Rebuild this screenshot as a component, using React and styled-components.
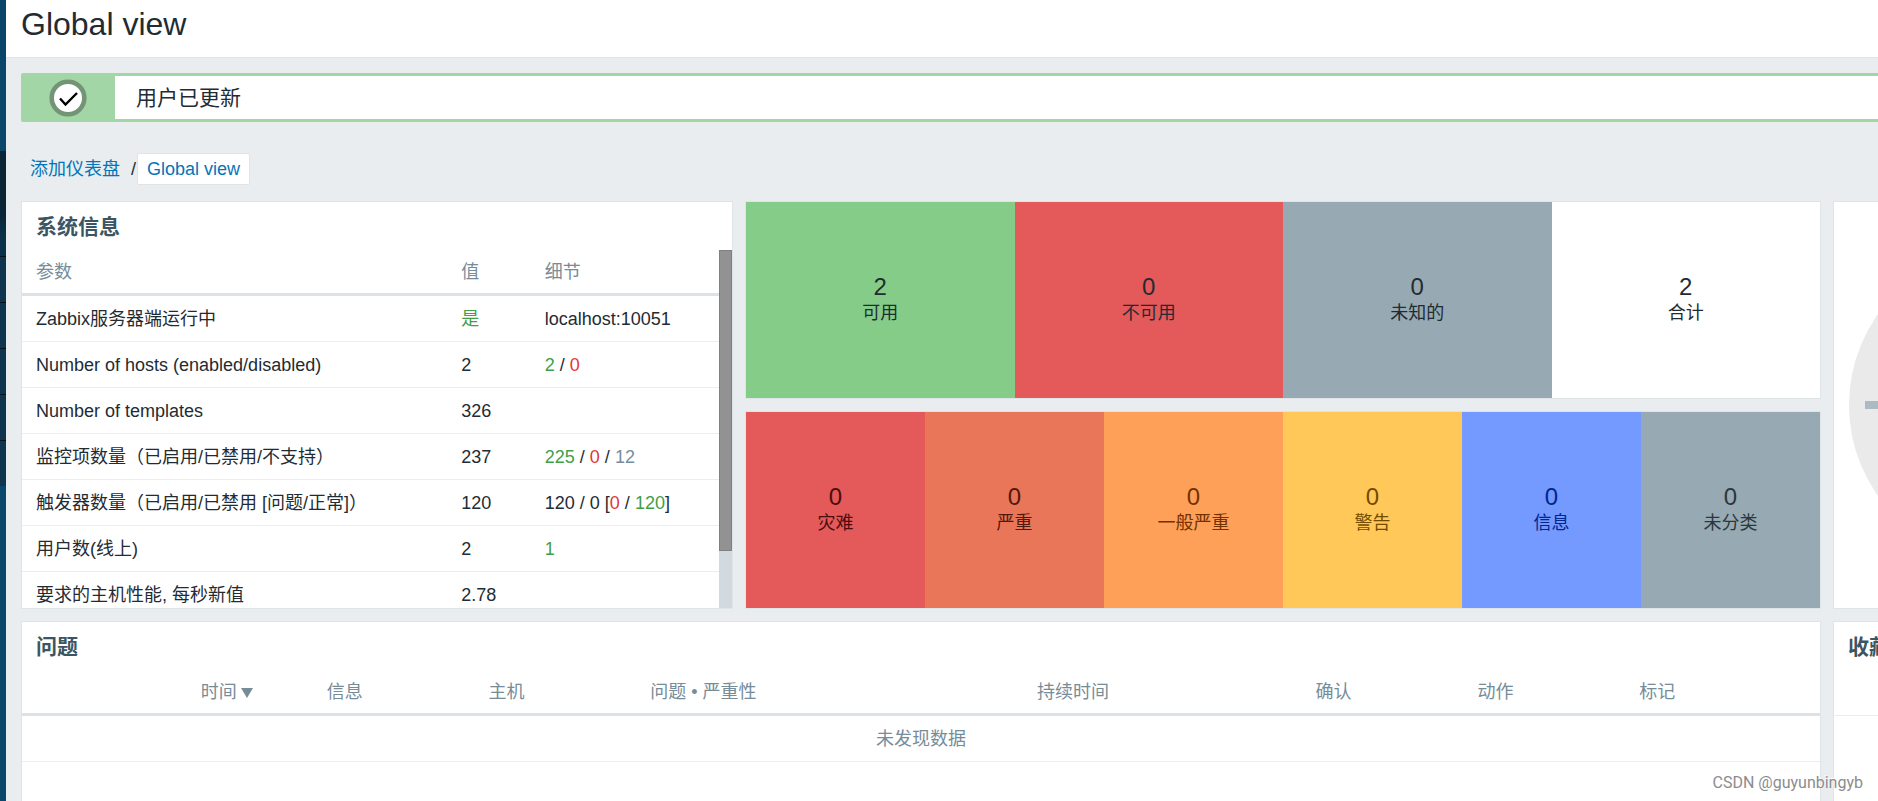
import React from 'react';
import styled, { createGlobalStyle } from 'styled-components';

const GlobalStyle = createGlobalStyle`
  * { box-sizing: border-box; }
  html, body, #root { height: 100%; }
  body {
    margin: 0;
    overflow: hidden;
    background: #e9edf0;
    color: #1f2c33;
    font: 400 18px/22px "Liberation Sans", "Noto Sans CJK SC", sans-serif;
  }
`;

const Page = styled.div`
  position: relative;
  display: flex;
  height: 100vh;
  overflow: hidden;
`;

const Sidebar = styled.nav`
  flex: none;
  display: flex;
  flex-direction: column;
  width: 6px;
  padding-top: 151px;
  background: #0a466a;
`;

const SectionHead = styled.div`
  height: 105px;
  background: linear-gradient(#0a2536, #0a2536 60%, #0b3048 80%);
`;

const SubItem = styled.div`
  height: 46px;
  border-top: 1px solid #04111a;
  background: #10344d;
`;

const Main = styled.main`
  flex: 1;
  min-width: 0;
  display: flex;
  flex-direction: column;
`;

const Header = styled.header`
  flex: none;
  height: 58px;
  padding: 6px 15px;
  background: #fff;
  border-bottom: 1px solid #dfe4e7;
`;

const Title = styled.h1`
  margin: 0;
  font-size: 32px;
  line-height: 36px;
  font-weight: 400;
`;

/* The dashboard is larger than the window: its last column and row run past the edges. */
const Content = styled.div`
  flex: 1;
  min-height: 0;
  display: flex;
  flex-direction: column;
  margin: 0 -316px -24px 0;
  padding: 15px 15px 0;
`;

const Message = styled.output`
  flex: none;
  display: flex;
  height: 49px;
  border: 3px solid #a3d6a6;
  border-radius: 2px;
  background: #fff;
  font-size: 21px;
  line-height: 43px;
`;

const MessageIcon = styled.span`
  flex: none;
  display: flex;
  align-items: center;
  justify-content: center;
  width: 91px;
  margin-right: 21px;
  padding-right: 3px;
  background: #a3d6a6;
`;

const Breadcrumbs = styled.nav`
  flex: none;
  display: flex;
  align-items: center;
  height: 32px;
  margin: 31px 0 16px;
  padding-left: 9px;
`;

const Separator = styled.span`
  margin-left: 11px;
`;

const Crumb = styled.a`
  color: #0275b8;
  text-decoration: none;
  ${({ $current }) => $current && `
    margin-left: 1px;
    padding: 4px 9px;
    background: #fff;
    border: 1px solid #dfe4e7;
    border-radius: 2px;
  `}
`;

const Dashboard = styled.div`
  flex: 1;
  min-height: 0;
  display: grid;
  grid-template-columns: minmax(0, 712fr) minmax(0, 1076fr) 346px;
  grid-template-rows: 198px 198px 1fr;
  gap: 12px;
`;

const Widget = styled.section`
  grid-column: ${({ $cols }) => $cols};
  grid-row: ${({ $rows }) => $rows};
  display: flex;
  flex-direction: column;
  min-height: 0;
  overflow: hidden;
  background: #fff;
  border: 1px solid #dfe4e7;
`;

const WidgetTitle = styled.h2`
  flex: none;
  height: 48px;
  margin: 0;
  padding: 0 14px;
  font-size: 21px;
  line-height: 50px;
  font-weight: 700;
  color: #3c5563;
`;

const ScrollArea = styled.div`
  flex: 1;
  min-height: 0;
  display: flex;
  align-items: stretch;
  overflow: hidden;
`;

const ScrollBody = styled.div`
  flex: 1;
  min-width: 0;
`;

const ScrollTrack = styled.div`
  flex: none;
  width: 13px;
  background: #d2d9df;
`;

const ScrollThumb = styled.div`
  height: 84%;
  background: #929292;
  border: 1px solid #808080;
`;

const Table = styled.table`
  width: 100%;
  table-layout: fixed;
  border-collapse: separate;
  border-spacing: 0;
`;

const Th = styled.th`
  width: ${({ $w }) => $w || 'auto'};
  height: 46px;
  padding: 0 0 0 14px;
  text-align: left;
  font-weight: 400;
  white-space: nowrap;
  color: #768d99;
  border-bottom: 3px solid #dce2e5;
`;

const ProblemTh = styled(Th)`
  padding-left: 17px;
`;

const Td = styled.td`
  height: 46px;
  padding: 0 0 0 14px;
  white-space: nowrap;
  border-bottom: 1px solid #ebeef0;
`;

const EmptyTd = styled(Td)`
  padding: 0;
  text-align: center;
  color: #768d99;
`;

const EmptyRow = styled.div`
  height: 46px;
  border-bottom: 1px solid #ebeef0;
`;

const tones = { green: '#429e47', red: '#e33734', grey: '#768d99' };

const Tone = styled.span`
  color: ${({ $tone }) => tones[$tone]};
`;

const SortArrow = styled.svg`
  margin-left: 4px;
`;

const Tiles = styled.div`
  flex: 1;
  display: flex;
`;

const Tile = styled.div`
  flex: 1 1 0;
  display: flex;
  flex-direction: column;
  align-items: center;
  justify-content: center;
  line-height: 26px;
  background: ${({ $bg }) => $bg};
  color: ${({ $fg }) => $fg};
`;

const Count = styled.span`
  font-size: 24px;
`;

const ClockFace = styled.svg`
  display: block;
  width: 314px;
  height: 314px;
  margin: auto;
`;

const Watermark = styled.div`
  position: absolute;
  right: 15px;
  bottom: 7px;
  font-family: Roboto, "Liberation Sans", sans-serif;
  font-size: 16px;
  color: #8c8c8c;
  text-shadow: -1px -1px 0 #fff;
`;

const G = ({ children }) => <Tone $tone="green">{children}</Tone>;
const R = ({ children }) => <Tone $tone="red">{children}</Tone>;
const N = ({ children }) => <Tone $tone="grey">{children}</Tone>;

const systemRows = [
  ['Zabbix服务器端运行中', <G>是</G>, 'localhost:10051'],
  ['Number of hosts (enabled/disabled)', '2', <><G>2</G> / <R>0</R></>],
  ['Number of templates', '326', ''],
  ['监控项数量（已启用/已禁用/不支持）', '237', <><G>225</G> / <R>0</R> / <N>12</N></>],
  ['触发器数量（已启用/已禁用 [问题/正常]）', '120', <>120 / 0 [<R>0</R> / <G>120</G>]</>],
  ['用户数(线上)', '2', <G>1</G>],
  ['要求的主机性能, 每秒新值', '2.78', ''],
];

const hostTiles = [
  ['2', '可用', '#86cc89', '#1f2c33'],
  ['0', '不可用', '#e45959', '#1f2c33'],
  ['0', '未知的', '#97aab3', '#1f2c33'],
  ['2', '合计', '#ffffff', '#1f2c33'],
];

const severityTiles = [
  ['0', '灾难', '#e45959', '#4b0c0c'],
  ['0', '严重', '#e97659', '#52190b'],
  ['0', '一般严重', '#ffa059', '#733100'],
  ['0', '警告', '#ffc859', '#734c00'],
  ['0', '信息', '#7499ff', '#00268e'],
  ['0', '未分类', '#97aab3', '#2b373d'],
];

const TileRow = ({ items }) => (
  <Tiles>
    {items.map(([count, label, bg, fg]) => (
      <Tile key={label} $bg={bg} $fg={fg}>
        <Count>{count}</Count>
        <span>{label}</span>
      </Tile>
    ))}
  </Tiles>
);

export default function App() {
  return (
    <Page>
      <GlobalStyle />
      <Sidebar>
        <SectionHead />
        {[0, 1, 2, 3, 4].map((i) => <SubItem key={i} />)}
      </Sidebar>
      <Main>
        <Header><Title>Global view</Title></Header>
        <Content>
          <Message>
            <MessageIcon>
              <svg width="38" height="38" viewBox="0 0 38 38">
                <circle cx="19" cy="19" r="16.3" fill="#fff" stroke="#739576" strokeWidth="4.6" />
                <path d="M11 19.5l5.5 6L28 14" fill="none" stroke="#000" strokeWidth="2.4" />
              </svg>
            </MessageIcon>
            用户已更新
          </Message>
          <Breadcrumbs>
            <Crumb href="#dashboards">添加仪表盘</Crumb>
            <Separator>/</Separator>
            <Crumb href="#global" $current>Global view</Crumb>
          </Breadcrumbs>
          <Dashboard>
            <Widget $cols="1" $rows="1 / 3">
              <WidgetTitle>系统信息</WidgetTitle>
              <ScrollArea>
                <ScrollBody>
                  <Table>
                    <thead>
                      <tr><Th $w="61%">参数</Th><Th $w="12%">值</Th><Th>细节</Th></tr>
                    </thead>
                    <tbody>
                      {systemRows.map(([name, value, details]) => (
                        <tr key={name}><Td>{name}</Td><Td>{value}</Td><Td>{details}</Td></tr>
                      ))}
                    </tbody>
                  </Table>
                </ScrollBody>
                <ScrollTrack><ScrollThumb /></ScrollTrack>
              </ScrollArea>
            </Widget>
            <Widget $cols="2" $rows="1"><TileRow items={hostTiles} /></Widget>
            <Widget $cols="2" $rows="2"><TileRow items={severityTiles} /></Widget>
            <Widget $cols="3" $rows="1 / 3">
              <ClockFace viewBox="0 0 314 314">
                <circle cx="157" cy="157" r="157" fill="#eaeaea" />
                <rect x="16" y="153" width="24" height="8" fill="#acbac1" />
              </ClockFace>
            </Widget>
            <Widget $cols="1 / 3" $rows="3">
              <WidgetTitle>问题</WidgetTitle>
              <Table>
                <thead>
                  <tr>
                    <ProblemTh $w="9%" />
                    <ProblemTh $w="7%">
                      时间
                      <SortArrow width="12" height="10" viewBox="0 0 12 10">
                        <path d="M0 0h12L6 10z" fill="#768d99" />
                      </SortArrow>
                    </ProblemTh>
                    <ProblemTh $w="9%">信息</ProblemTh>
                    <ProblemTh $w="9%">主机</ProblemTh>
                    <ProblemTh>问题 • 严重性</ProblemTh>
                    <ProblemTh $w="15.5%">持续时间</ProblemTh>
                    <ProblemTh $w="9%">确认</ProblemTh>
                    <ProblemTh $w="9%">动作</ProblemTh>
                    <ProblemTh $w="11%">标记</ProblemTh>
                  </tr>
                </thead>
                <tbody>
                  <tr><EmptyTd colSpan={9}>未发现数据</EmptyTd></tr>
                </tbody>
              </Table>
            </Widget>
            <Widget $cols="3" $rows="3">
              <WidgetTitle>收藏</WidgetTitle>
              <EmptyRow />
            </Widget>
          </Dashboard>
        </Content>
      </Main>
      <Watermark>CSDN @guyunbingyb</Watermark>
    </Page>
  );
}
